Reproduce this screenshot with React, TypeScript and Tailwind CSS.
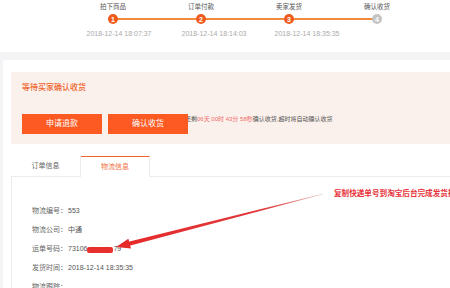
import React from "react"

const steps = [
  { label: "拍下商品", date: "2018-12-14 18:07:37", done: true, shift: "translate-x-[6px]" },
  { label: "订单付款", date: "2018-12-14 18:14:03", done: true, shift: "translate-x-[13px]" },
  { label: "卖家发货", date: "2018-12-14 18:35:35", done: true, shift: "translate-x-[18px]" },
  { label: "确认收货", date: "", done: false, shift: "" },
]

const rows: [string, React.ReactNode][] = [
  ["物流编号：", "553"],
  ["物流公司：", "中通"],
  [
    "运单号码：",
    <span className="flex items-center">
      73106
      <span className="inline-block w-[26px] h-[6px] bg-[#e8302f] rounded-[2px]" />
      79
    </span>,
  ],
  ["发货时间：", "2018-12-14 18:35:35"],
  ["物流跟踪：", ""],
]

function Stepper() {
  return (
    <div className="relative h-[52px] bg-white">
      <div className="absolute left-[113px] top-[18px] w-[263px] h-[2px] bg-[#f28a3e]" />
      <div className="flex pl-[69px] pt-[3px]">
        {steps.map((s, i) => (
          <div key={i} className="relative w-[88px] flex flex-col items-center">
            <div className="text-[6.5px] leading-[8px] text-[#555]">{s.label}</div>
            <div
              className={`mt-[3px] w-[10px] h-[10px] rounded-full flex items-center justify-center text-white text-[7px] leading-none font-bold ${
                s.done ? "bg-[#f05a1c]" : "bg-[#c4c4c4]"
              }`}
            >
              {i + 1}
            </div>
            <div className={`mt-[5px] text-[7px] leading-[9px] text-[#aaa] whitespace-nowrap ${s.shift}`}>
              {s.date}
            </div>
          </div>
        ))}
      </div>
    </div>
  )
}

function Arrow() {
  return (
    <svg className="absolute left-0 top-0 pointer-events-none" width="450" height="288" viewBox="0 0 450 288">
      <defs>
        <linearGradient id="shaft" x1="128" y1="244" x2="323" y2="194" gradientUnits="userSpaceOnUse">
          <stop offset="0" stopColor="#e52a2a" />
          <stop offset="0.7" stopColor="#e0393c" />
          <stop offset="1" stopColor="#e8c8c8" />
        </linearGradient>
      </defs>
      <polygon points="128.5,246 323.1,194.3 322.9,193.7 127.5,242" fill="url(#shaft)" />
      <polygon points="116,247 131,248.6 128.4,238.7" fill="#e52a2a" />
    </svg>
  )
}

export default function App() {
  return (
    <div className="relative w-[450px] h-[288px] overflow-hidden bg-[#f4f4f6] font-['Liberation_Sans','Noto_Sans_CJK_SC',sans-serif]">
      <Stepper />
      <div className="mt-[8px] ml-[3px] h-[228px] bg-white pl-[8px] pt-[12px]">
        <div className="bg-[#fbf1ec] pl-[11px] pt-[11px] pb-[10px]">
          <div className="text-[8px] leading-[10px] text-[#f0642c] font-medium">等待买家确认收货</div>
          <div className="mt-[21px] flex items-start">
            <button className="relative z-10 w-[80px] h-[20px] bg-[#fc5a22] text-white text-[8px]">申请退款</button>
            <button className="relative z-10 ml-[6px] w-[80px] h-[20px] bg-[#fc5a22] text-white text-[8px]">确认收货</button>
            <div className="-ml-[3px] mt-[2px] text-[6px] leading-[6px] text-[#555] whitespace-nowrap">
              还剩<span className="text-[#f06a6a]">06天 00时 43分 58秒</span>确认收货,超时将自动确认收货
            </div>
          </div>
        </div>

        <div className="mt-[12px] flex h-[21px]">
          <div className="w-[70px] flex items-center justify-center border-b border-r border-[#ececec] text-[7px] text-[#666]">
            订单信息
          </div>
          <div className="w-[69px] flex items-center justify-center border-t-[1.5px] border-r border-t-[#f0652d] border-r-[#ececec] text-[7px] text-[#f07040]">
            物流信息
          </div>
          <div className="flex-1 border-b border-[#ececec]" />
        </div>

        <div className="h-[120px] border-l border-[#ececec] pl-[20px] pt-[25px] flex flex-col">
          {rows.map(([k, v], i) => (
            <div key={i} className="h-[19px] flex items-center text-[7px] text-[#666] whitespace-nowrap">
              <span>{k}</span>
              <span className="ml-[1px] text-[#555]">{v}</span>
            </div>
          ))}
        </div>
      </div>

      <div className="absolute left-[334px] top-[189px] text-[7.6px] leading-[10px] font-bold text-[#e8333a] whitespace-nowrap">
        复制快递单号到淘宝后台完成发货操作
      </div>
      <Arrow />
    </div>
  )
}
